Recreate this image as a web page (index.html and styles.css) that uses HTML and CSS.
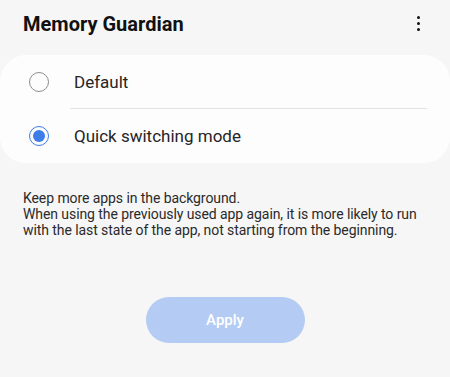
FILE: index.html
```html
<!DOCTYPE html>
<html lang="en">
<head>
<meta charset="utf-8">
<link rel="stylesheet" href="styles.css">
</head>
<body>
<div class="page">
  <header class="header">
    <h1 class="title">Memory Guardian</h1>
    <div class="more" aria-label="More options"><span></span><span></span><span></span></div>
  </header>
  <section class="card">
    <div class="row">
      <span class="radio"></span>
      <span class="label">Default</span>
    </div>
    <div class="row">
      <span class="radio checked"></span>
      <span class="label">Quick switching mode</span>
    </div>
  </section>
  <p class="desc">Keep more apps in the background.<br>When using the previously used app again, it is more likely to run<br>with the last state of the app, not starting from the beginning.</p>
  <div class="actions">
    <button class="apply">Apply</button>
  </div>
</div>
</body>
</html>
```
FILE: styles.css
```css
html, body {
  margin: 0;
  padding: 0;
  background: #f6f6f6;
}
body {
  font-family: Roboto, "Noto Sans", sans-serif;
  width: 450px;
  height: 377px;
  overflow: hidden;
}
.page {
  display: flex;
  flex-direction: column;
}
.header {
  height: 55px;
  display: flex;
  align-items: flex-start;
  justify-content: space-between;
  padding: 0 30px 0 23px;
  box-sizing: border-box;
}
.title {
  margin: 12px 0 0;
  font-size: 20px;
  line-height: 24px;
  font-weight: 700;
  color: #111;
}
.more {
  display: flex;
  flex-direction: column;
  gap: 3px;
  margin-top: 16px;
}
.more span {
  width: 3px;
  height: 3px;
  border-radius: 50%;
  background: #111;
}
.card {
  background: #fdfdfd;
  border-radius: 26px;
  height: 108px;
  display: flex;
  flex-direction: column;
}
.row {
  flex: 1;
  display: flex;
  align-items: center;
  padding-left: 29px;
  position: relative;
}
.row:first-child::after {
  content: "";
  position: absolute;
  left: 70px;
  right: 23px;
  bottom: 0;
  height: 1px;
  background: #e3e3e3;
}
.radio {
  width: 20px;
  height: 20px;
  border-radius: 50%;
  border: 1.5px solid #8e8e8e;
  box-sizing: border-box;
  margin-right: 25px;
  flex: none;
  display: flex;
  align-items: center;
  justify-content: center;
}
.radio.checked {
  border-color: #3e7de8;
}
.radio.checked::before {
  content: "";
  width: 12px;
  height: 12px;
  border-radius: 50%;
  background: #3e7de8;
}
.label {
  font-size: 17px;
  color: #252525;
}
.desc {
  margin: 27px 4px 0 23px;
  font-size: 14px;
  letter-spacing: -0.08px;
  line-height: 16px;
  color: #2a2a2a;
}
.actions {
  display: flex;
  justify-content: center;
  margin-top: 59px;
}
.apply {
  width: 159px;
  height: 46px;
  border: none;
  border-radius: 23px;
  background: #b4ccf3;
  color: #fff;
  font-family: Roboto, "Noto Sans", sans-serif;
  font-size: 15px;
  font-weight: 500;
}
```
